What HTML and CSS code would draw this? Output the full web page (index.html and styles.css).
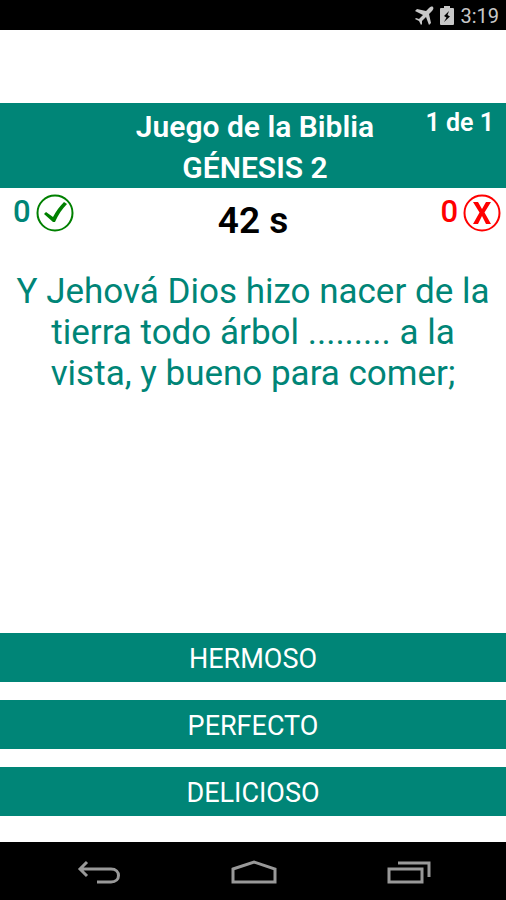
FILE: index.html
```html
<!DOCTYPE html>
<html lang="es">

<head>
    <meta charset="utf-8">
    <meta name="viewport" content="width=device-width, initial-scale=1.0">

    <title>Juego de la Biblia</title>

    <link rel="stylesheet" href="styles.css">
</head>

<body>
    <div class="status-bar">
        <svg class="plane" viewBox="0 0 20 20" width="20" height="20" aria-hidden="true">
            <path d="M19 1 C18 0 16 1 15 2 L12 5 L3 3 L1 5 L9 9 L5 13 L2 12 L1 13 L5 15 L7 19 L8 18 L8 15 L12 11 L15 19 L17 17 L15 8 L18 5 C19 4 20 2 19 1 Z" />
        </svg>
        <svg class="battery" viewBox="0 0 14 20" width="14" height="20" aria-hidden="true">
            <path class="battery-body" d="M4 0 H10 V2 H13 Q14 2 14 3 V18 Q14 19 13 19 H1 Q0 19 0 18 V3 Q0 2 1 2 H4 Z" />
            <path class="battery-bolt" d="M9 5 L4 10 L6.500 11.500 L4 16 L10 10.500 L7.500 9 Z" />
        </svg>
        <span class="clock">3:19</span>
    </div>

    <main class="game">
        <header class="game-header">
            <div class="titles">
                <h1>Juego de la Biblia</h1>
                <h2>GÉNESIS 2</h2>
            </div>
            <span class="counter">1 de 1</span>
        </header>

        <section class="score">
            <div class="hits">
                <span>0</span>
                <svg viewBox="0 0 38 38" width="38" height="38" role="img" aria-label="Aciertos">
                    <circle cx="19" cy="19" r="17.500" />
                    <path d="M8 20 L10 18 L17 23 C20 17 24 12 28 8 L31 10 C26 15 22 21 19 28 L17 28 Z" />
                </svg>
            </div>
            <div class="timer">42 s</div>
            <div class="misses">
                <span>0</span>
                <svg viewBox="0 0 38 38" width="38" height="38" role="img" aria-label="Errores">
                    <circle cx="19" cy="19" r="17.500" />
                    <path d="M10 8 H15 L19 15 L23 8 H28 L21.500 18.500 L28 30 H23 L19 22 L15 30 H10 L16.500 18.500 Z" />
                </svg>
            </div>
        </section>

        <p class="question">Y Jehová Dios hizo nacer de la tierra todo árbol ......... a la vista, y bueno para comer;</p>

        <div class="answers">
            <button type="button">HERMOSO</button>
            <button type="button">PERFECTO</button>
            <button type="button">DELICIOSO</button>
        </div>
    </main>

    <nav class="nav-bar">
        <button type="button" aria-label="Atrás">
            <svg viewBox="0 0 46 26" width="46" height="26">
                <path d="M11 2 L4 9 L11 16 M4 9 H35 C45 9 45 22 35 22 H21" />
            </svg>
        </button>
        <button type="button" aria-label="Inicio">
            <svg viewBox="0 0 46 26" width="46" height="26">
                <path d="M2 9 L23 2 L44 9 V22 H2 Z" />
            </svg>
        </button>
        <button type="button" aria-label="Recientes">
            <svg viewBox="0 0 46 26" width="46" height="26">
                <path d="M3 9 H36 V22 H3 Z M12 3 H43 V17" />
            </svg>
        </button>
    </nav>
</body>

</html>
```

FILE: styles.css
```css
* {
    margin: 0;
    padding: 0;
    box-sizing: border-box;
}

body {
    display: flex;
    flex-direction: column;
    min-height: 100vh;
    font-family: Roboto, "Liberation Sans", sans-serif;
    background-color: #fff;
}

button {
    border: none;
    font-family: inherit;
    cursor: pointer;
}

.status-bar {
    display: flex;
    align-items: center;
    justify-content: flex-end;
    gap: 6px;
    height: 30px;
    padding: 2px 7px 0 0;
    background-color: #000;
    color: #c8c8c8;
}

.plane,
.battery-body {
    fill: #c8c8c8;
}

.battery-bolt {
    fill: #000;
}

.clock {
    font-size: 20px;
    line-height: 28px;
}

.game {
    display: flex;
    flex: 1;
    flex-direction: column;
    padding: 73px 0 26px;
}

.game-header {
    display: grid;
    grid-template-columns: 1fr auto 1fr;
    height: 85px;
    padding: 3px 12px 0 16px;
    background-color: #008577;
    color: #fff;
}

.titles {
    grid-column: 2;
    text-align: center;
}

.titles h1,
.titles h2 {
    font-size: 30px;
    font-weight: 600;
    line-height: 41px;
}

.counter {
    justify-self: end;
    font-size: 25px;
    font-weight: 600;
    line-height: 34px;
}

.score {
    display: grid;
    grid-template-columns: 1fr auto 1fr;
    padding: 6px 5px 0;
}

.hits,
.misses {
    display: flex;
    gap: 5px;
    font-size: 31px;
    font-weight: 500;
    line-height: 36px;
}

.hits {
    padding-left: 8px;
    color: #008577;
}

.misses {
    justify-content: flex-end;
    color: #f00;
}

.score circle {
    fill: none;
    stroke-width: 2;
}

.hits circle {
    stroke: #008000;
}

.hits path {
    fill: #008000;
}

.misses circle {
    stroke: #f00;
}

.misses path {
    fill: #f00;
}

.timer {
    padding-top: 5px;
    font-size: 37px;
    font-weight: 600;
    line-height: 44px;
}

.question {
    padding: 28px 14px;
    color: #008577;
    font-size: 35px;
    line-height: 41px;
    text-align: center;
}

.answers {
    display: flex;
    flex-direction: column;
    gap: 18px;
    margin-top: auto;
}

.answers button {
    height: 49px;
    padding-top: 3px;
    background-color: #008577;
    color: #fff;
    font-size: 27px;
    line-height: 46px;
}

.nav-bar {
    display: grid;
    grid-template-columns: repeat(3, 1fr);
    height: 58px;
    padding: 0 19px 0 21px;
    background-color: #000;
}

.nav-bar button {
    display: flex;
    align-items: center;
    justify-content: center;
    padding-top: 3px;
    background: none;
}

.nav-bar path {
    fill: none;
    stroke: #999;
    stroke-width: 3;
}
```
